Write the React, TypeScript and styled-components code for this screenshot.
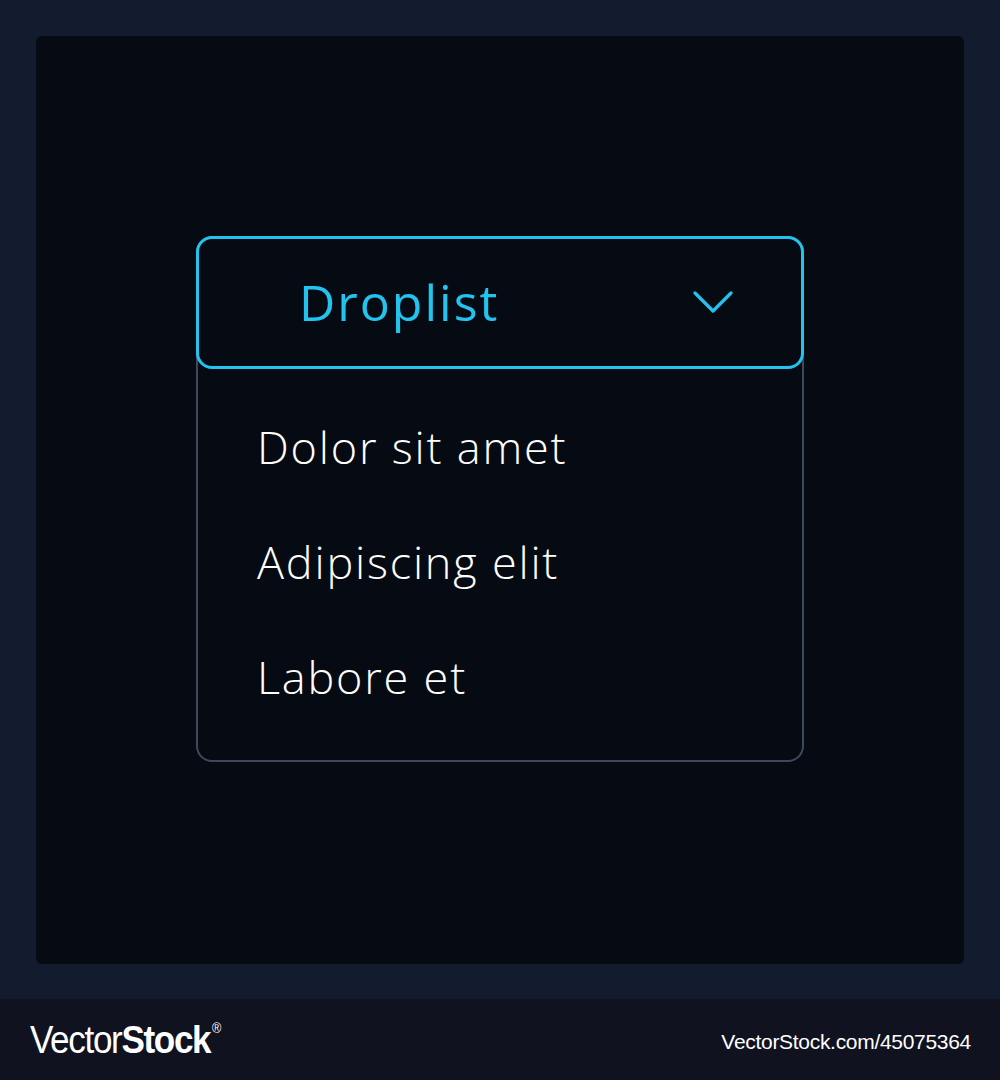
import React from 'react';
import styled, {createGlobalStyle} from "styled-components";

const GlobalStyle = createGlobalStyle`
    html, body {
        margin: 0;
        padding: 0;
        background: #131b2e;
    }
    * {
        box-sizing: border-box;
    }
`

const PageBox = styled.div`
    display: flex;
    flex-direction: column;
    width: 1000px;
    height: 1080px;
`

const StageBox = styled.div`
    display: flex;
    height: 999px;
    padding: 36px 36px 35px 36px;
    background: #131b2e;
`

const PanelBox = styled.div`
    flex: 1;
    display: flex;
    flex-direction: column;
    align-items: center;
    padding-top: 200px;
    background: #060a12;
    border-radius: 6px;
`

const DropdownBox = styled.div`
    display: flex;
    flex-direction: column;
    width: 608px;
    height: 526px;
    border: 2px solid #3e485c;
    border-radius: 16px;
`

const HeaderBox = styled.div`
    display: flex;
    align-items: center;
    justify-content: space-between;
    height: 133px;
    margin: -2px -2px 0 -2px;
    padding: 0 68px 0 100px;
    border: 3px solid #22c3ee;
    border-radius: 16px;
    background: #060a12;
`

const HeaderLabel = styled.span`
    font-family: "Open Sans", "DejaVu Sans", sans-serif;
    font-weight: 500;
    font-size: 50px;
    color: #22c3ee;
    letter-spacing: 2px;
    padding-bottom: 2px;
`

const ItemsBox = styled.div`
    display: flex;
    flex-direction: column;
    gap: 56px;
    padding: 48px 0 0 59px;
`

const ItemLabel = styled.span`
    font-family: "Open Sans", "DejaVu Sans", sans-serif;
    font-weight: 300;
    font-size: 45px;
    line-height: 59px;
    color: #ffffff;
    letter-spacing: 1.8px;
`

const FooterBar = styled.div`
    display: flex;
    align-items: center;
    justify-content: space-between;
    height: 81px;
    padding: 0 29px 0 30px;
    background: #10121f;
    color: #ffffff;
    font-family: "Liberation Sans Narrow", "Liberation Sans", sans-serif;
`

const LogoText = styled.span`
    font-size: 39px;
    font-weight: 300;
    letter-spacing: -1.5px;
    transform: scaleX(0.9);
    transform-origin: left center;

    b {
        font-weight: 700;
    }

    sup {
        font-size: 14px;
        vertical-align: 20px;
        margin-left: 2px;
    }
`

const FooterId = styled.span`
    font-size: 21px;
    letter-spacing: -0.3px;
    padding-top: 4px;
`

const Chevron: React.FC = () => (
    <svg width="40" height="24" viewBox="0 0 40 24">
        <polyline points="2,2 20,20 38,2" fill="none" stroke="#22c3ee" strokeWidth="3.2" strokeLinecap="round" strokeLinejoin="round"/>
    </svg>
)

const items = ["Dolor sit amet", "Adipiscing elit", "Labore et"];

export default function App() {
    return (
        <PageBox>
            <GlobalStyle/>
            <StageBox>
                <PanelBox>
                    <DropdownBox>
                        <HeaderBox>
                            <HeaderLabel>Droplist</HeaderLabel>
                            <Chevron/>
                        </HeaderBox>
                        <ItemsBox>
                            {items.map(item => <ItemLabel key={item}>{item}</ItemLabel>)}
                        </ItemsBox>
                    </DropdownBox>
                </PanelBox>
            </StageBox>
            <FooterBar>
                <LogoText>Vector<b>Stock</b><sup>®</sup></LogoText>
                <FooterId>VectorStock.com/45075364</FooterId>
            </FooterBar>
        </PageBox>
    )
}
